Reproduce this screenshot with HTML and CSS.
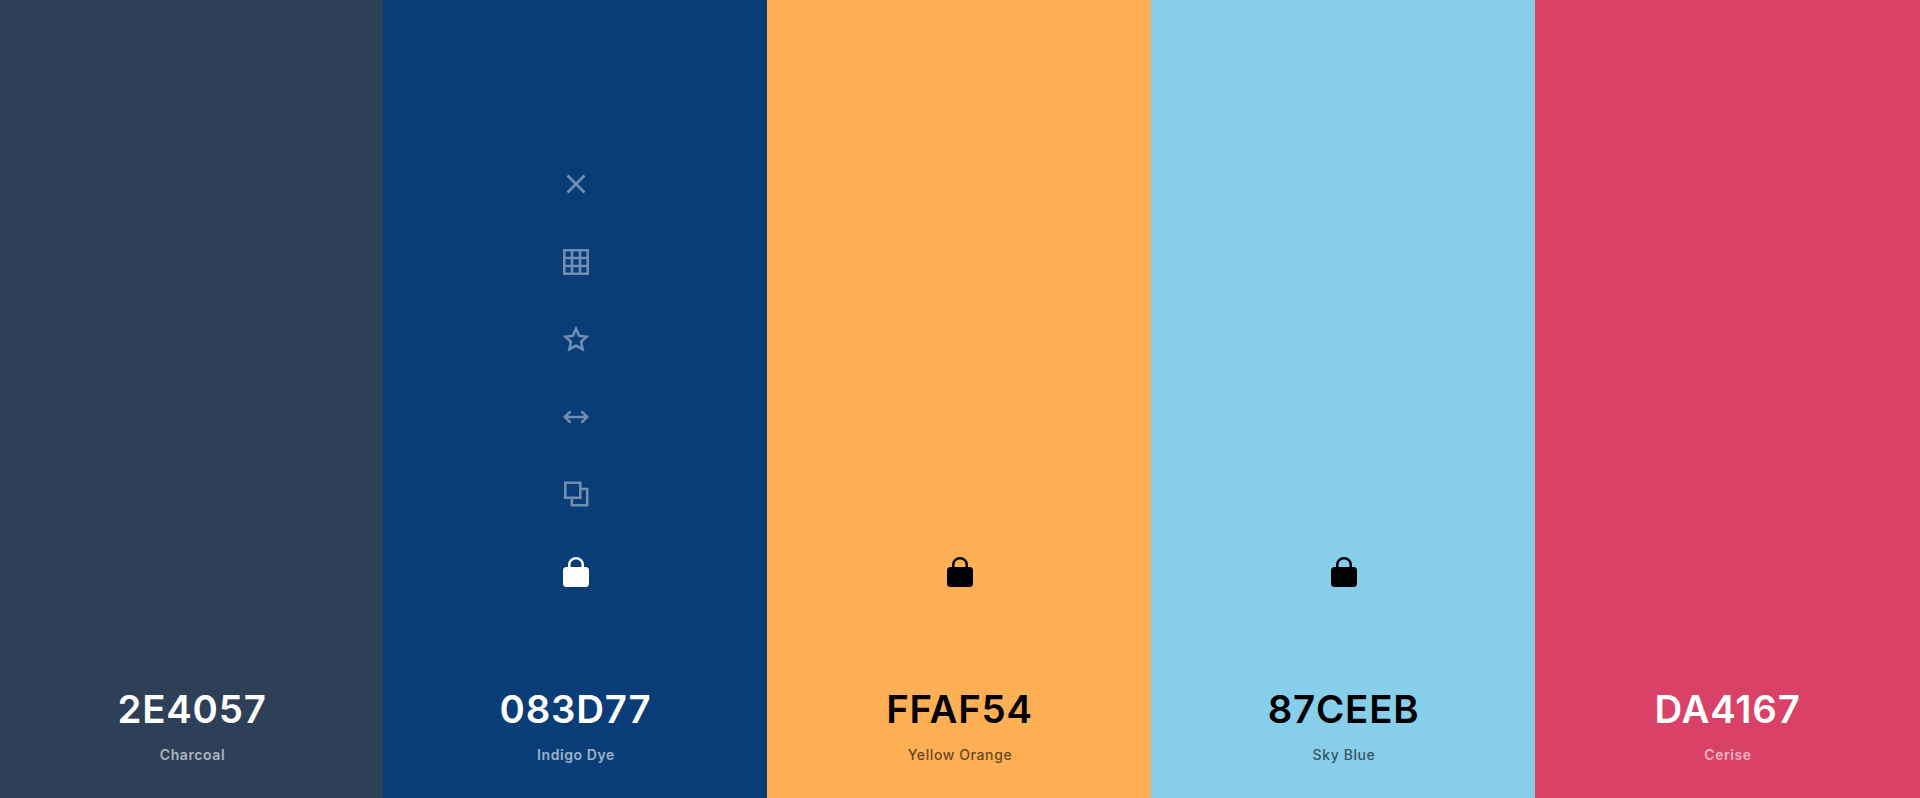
FILE: index.html
```html
<!DOCTYPE html>
<html lang="en">
<head>
<meta charset="utf-8">
<title>Palette</title>
<link rel="stylesheet" href="styles.css">
</head>
<body>
<main class="palette">
  <section class="swatch swatch-charcoal on-dark">
    <div class="info"><h2 class="hex">2E4057</h2><p class="name">Charcoal</p></div>
  </section>
  <section class="swatch swatch-indigo on-dark">
    <div class="tools">
      <svg class="icon muted" viewBox="0 0 26 26"><path d="M4.500 4.500l17 17M21.500 4.500l-17 17"/></svg>
      <svg class="icon muted" viewBox="0 0 26 26"><path d="M1.300 1.300h23.400v23.400H1.300zM9 1.300v23.400M17 1.300v23.400M1.300 9h23.400M1.300 17h23.400"/></svg>
      <svg class="icon muted" viewBox="0 0 26 26"><path d="M13 2.800l3.200 7 7.500.9-5.600 5.100 1.500 7.400-6.600-3.700-6.600 3.700 1.500-7.400-5.600-5.100 7.500-.9z"/></svg>
      <svg class="icon muted" viewBox="0 0 26 26"><path d="M2 13h22M7.500 7.300L1.800 13l5.700 5.700M18.500 7.300l5.700 5.700-5.700 5.700"/></svg>
      <svg class="icon muted" viewBox="0 0 26 26"><path d="M2.300 1.800h15v15h-15zM17.300 8h6.900v16.200H8.800v-7.400"/></svg>
      <svg class="icon lock" viewBox="0 0 26 30"><path class="shackle" d="M6.250 11V7.500a6.750 6.250 0 0 1 13.500 0V11"/><rect y="10" width="26" height="20" rx="3.500"/></svg>
    </div>
    <div class="info"><h2 class="hex">083D77</h2><p class="name">Indigo Dye</p></div>
  </section>
  <section class="swatch swatch-orange on-light">
    <div class="tools">
      <svg class="icon lock" viewBox="0 0 26 30"><path class="shackle" d="M6.250 11V7.500a6.750 6.250 0 0 1 13.500 0V11"/><rect y="10" width="26" height="20" rx="3.500"/></svg>
    </div>
    <div class="info"><h2 class="hex">FFAF54</h2><p class="name">Yellow Orange</p></div>
  </section>
  <section class="swatch swatch-sky on-light">
    <div class="tools">
      <svg class="icon lock" viewBox="0 0 26 30"><path class="shackle" d="M6.250 11V7.500a6.750 6.250 0 0 1 13.500 0V11"/><rect y="10" width="26" height="20" rx="3.500"/></svg>
    </div>
    <div class="info"><h2 class="hex">87CEEB</h2><p class="name">Sky Blue</p></div>
  </section>
  <section class="swatch swatch-cerise on-dark">
    <div class="info"><h2 class="hex">DA4167</h2><p class="name">Cerise</p></div>
  </section>
</main>
</body>
</html>
```
FILE: styles.css
```css
* { box-sizing: border-box; }
html, body { margin: 0; height: 100%; }
body { font-family: Inter, "Liberation Sans", sans-serif; overflow: hidden; }
.palette { display: grid; grid-template-columns: repeat(5, 1fr); height: 798px; }
.swatch { display: flex; flex-direction: column; align-items: center; justify-content: flex-end; padding-bottom: 33px; }
.swatch + .swatch { margin-left: -1px; }
.swatch-charcoal { background: #2e4057; }
.swatch-indigo { background: #083d77; }
.swatch-orange { background: #ffaf54; }
.swatch-sky { background: #87ceeb; }
.swatch-cerise { background: #da4167; }
.on-dark { color: #fff; }
.on-light { color: #000; }
.tools { display: flex; flex-direction: column; align-items: center; gap: 47.600px; margin-bottom: 99px; }
.icon { display: block; width: 26px; height: 30px; fill: none; stroke: currentColor; stroke-width: 2.600; }
.icon.muted { opacity: 0.42; }
.icon.lock rect { fill: currentColor; stroke: none; }
.icon.lock .shackle { stroke-width: 2.500; }
.info { display: flex; flex-direction: column; align-items: center; gap: 13px; }
.hex { margin: 0; font-size: 38.400px; line-height: 46px; font-weight: 600; letter-spacing: 0.800px; }
.name { margin: 0 0 0 1px; font-size: 14px; line-height: 20px; font-weight: 600; letter-spacing: 0.600px; opacity: 0.6; }
.on-light .name { font-weight: 500; opacity: .6; }
```
